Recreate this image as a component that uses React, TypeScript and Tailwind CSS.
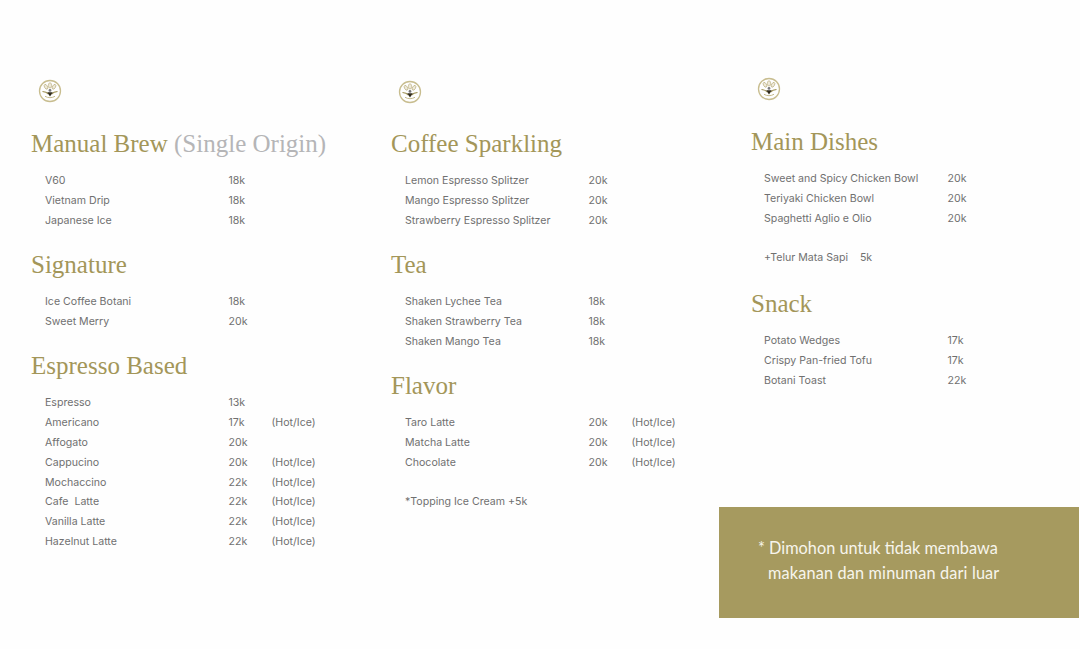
const Logo = () => (
  <svg width="24" height="24" viewBox="0 0 24 24" fill="none" className="block">
    <circle cx="12" cy="12" r="10.5" stroke="#c8bd8f" strokeWidth="1.3" />
    <g fill="#efeadb" stroke="#b3a671" strokeWidth="0.6">
      <ellipse cx="12" cy="6.4" rx="1.6" ry="2.7" />
      <ellipse cx="8" cy="7.800" rx="1.500" ry="2.600" transform="rotate(-30 8 7.800)" />
      <ellipse cx="16" cy="7.800" rx="1.500" ry="2.600" transform="rotate(30 16 7.800)" />
    </g>
    <path d="M4.500 12.500c2.500.2 4.500 1 6 2.600M19.500 12.500c-2.500.2-4.500 1-6 2.600" stroke="#9c8e50" strokeWidth="1.100" />
    <path d="M7 17.300c1.700.9 3.300 1.400 5 1.400s3.300-.5 5-1.400" stroke="#bdb180" strokeWidth="0.900" />
    <circle cx="12" cy="11.400" r="1.400" fill="#77777a" />
    <path d="M9.200 13.200h5.600L12 17.500z" fill="#2f2a1c" />
  </svg>
);

type Row = [string, string?, string?] | null;

const Rows = ({ rows, cls = "pl-[14px]" }: { rows: Row[]; cls?: string }) => (
  <div className={`mt-[7.500px] font-['Inter',sans-serif] text-[10.600px] text-[#707070] ${cls}`}>
    {rows.map((r, i) =>
      r ? (
        <div key={i} className="flex h-[19.8px] items-center whitespace-pre">
          <span className="w-[183.500px]">{r[0]}</span>
          <span className="w-[43px]">{r[1]}</span>
          <span>{r[2]}</span>
        </div>
      ) : (
        <div key={i} className="h-[19.8px]" />
      )
    )}
  </div>
);

const Heading = ({ children, cls = "" }: { children: React.ReactNode; cls?: string }) => (
  <h2 className={`h-[40px] whitespace-nowrap font-['Liberation_Serif',serif] text-[25px] leading-[40px] text-[#a39659] ${cls}`}>
    {children}
  </h2>
);

const H = "(Hot/Ice)";

export default function App() {
  return (
    <div className="grid h-[649px] w-[1080px] grid-cols-[360px_360px_360px] overflow-hidden bg-[#fefefe] pl-0">
      <div className="pl-[31px] pt-[79px]">
        <div className="ml-[7px] h-[45px]"><Logo /></div>
        <Heading>
          Manual Brew <span className="text-[#b5b5b7]">(Single Origin)</span>
        </Heading>
        <Rows rows={[["V60", "18k"], ["Vietnam Drip", "18k"], ["Japanese Ice", "18k"]]} />
        <Heading cls="mt-[14px]">Signature</Heading>
        <Rows rows={[["Ice Coffee Botani", "18k"], ["Sweet Merry", "20k"]]} />
        <Heading cls="mt-[14px]">Espresso Based</Heading>
        <Rows
          rows={[
            ["Espresso", "13k"],
            ["Americano", "17k", H],
            ["Affogato", "20k"],
            ["Cappucino", "20k", H],
            ["Mochaccino", "22k", H],
            ["Cafe  Latte", "22k", H],
            ["Vanilla Latte", "22k", H],
            ["Hazelnut Latte", "22k", H],
          ]}
        />
      </div>
      <div className="pl-[31px] pt-[80px]">
        <div className="ml-[7px] h-[44px]"><Logo /></div>
        <Heading>Coffee Sparkling</Heading>
        <Rows rows={[["Lemon Espresso Splitzer", "20k"], ["Mango Espresso Splitzer", "20k"], ["Strawberry Espresso Splitzer", "20k"]]} />
        <Heading cls="mt-[14px]">Tea</Heading>
        <Rows rows={[["Shaken Lychee Tea", "18k"], ["Shaken Strawberry Tea", "18k"], ["Shaken Mango Tea", "18k"]]} />
        <Heading cls="mt-[14px]">Flavor</Heading>
        <Rows rows={[["Taro Latte", "20k", H], ["Matcha Latte", "20k", H], ["Chocolate", "20k", H], null, ["*Topping Ice Cream +5k"]]} />
      </div>
      <div className="flex flex-col pl-[31px] pt-[77px]">
        <div className="ml-[6px] h-[44.500px]"><Logo /></div>
        <Heading>Main Dishes</Heading>
        <Rows cls="pl-[13px]" rows={[["Sweet and Spicy Chicken Bowl", "20k"], ["Teriyaki Chicken Bowl", "20k"], ["Spaghetti Aglio e Olio", "20k"], null, ["+Telur Mata Sapi    5k"]]} />
        <Heading cls="mt-[16px]">Snack</Heading>
        <Rows cls="pl-[13px]" rows={[["Potato Wedges", "17k"], ["Crispy Pan-fried Tofu", "17k"], ["Botani Toast", "22k"]]} />
        <div className="-ml-[32px] mt-[116.500px] h-[111px] w-[360px] bg-[#a69a5f] pl-[39px] pt-[28px] font-['Lato',sans-serif] text-[16.300px] leading-[25px] text-[#f7f5ec]">
          <p>* Dimohon untuk tidak membawa</p>
          <p className="pl-[10px] tracking-[0.15px]">makanan dan minuman dari luar</p>
        </div>
      </div>
    </div>
  );
}
